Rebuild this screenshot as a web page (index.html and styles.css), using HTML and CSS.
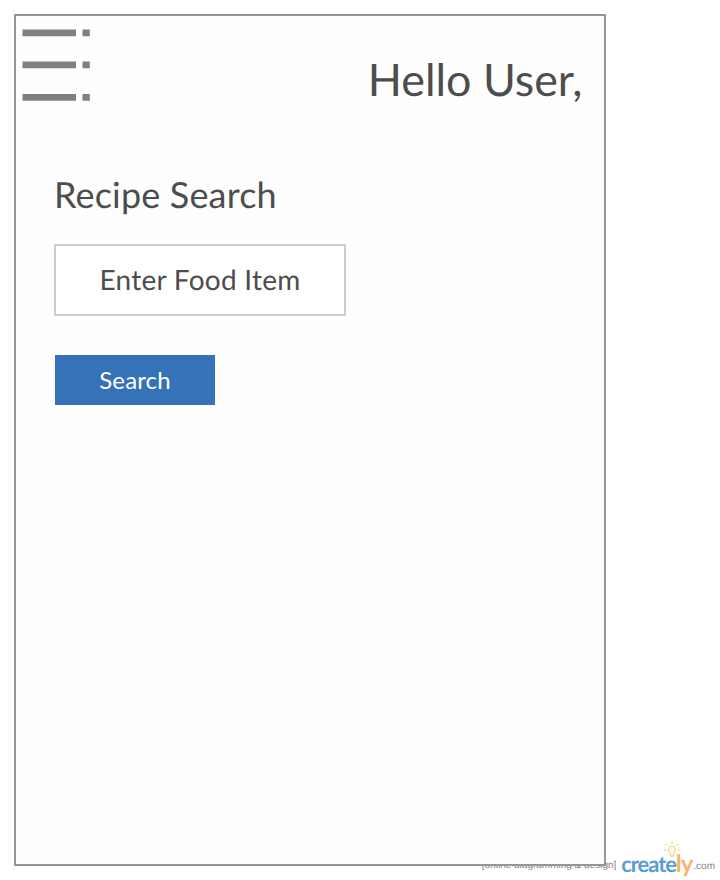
FILE: index.html
```
<!DOCTYPE html>
<html lang="en">
<head>
<meta charset="utf-8">
<title>Recipe Search</title>
<link rel="stylesheet" href="styles.css">
</head>
<body>
<main class="screen">
  <header class="header">
    <svg class="menu" width="68" height="72" viewBox="0 0 68 72" fill="#808080">
      <path d="M.5.5H54V7.300H.5zM60.500.5H67.800V7.300H60.500zM.5 32.500H54V39.300H.5zM60.500 32.500H67.800V39.300H60.500zM.5 65H54V71.800H.5zM60.500 65H67.800V71.800H60.500z"/>
    </svg>
    <div class="greeting">Hello User,</div>
  </header>
  <section class="search">
    <h1 class="title">Recipe Search</h1>
    <div class="field">Enter Food Item</div>
    <button class="button">Search</button>
  </section>
</main>
<footer class="credit">
  <span class="tagline">[online diagramming &amp; design]</span>
  <span class="brand">create<span class="ly">ly</span>
    <svg class="bulb" width="18" height="18" viewBox="0 0 18 18" fill="none" stroke="#fbd38a" stroke-width="1.300">
      <path d="M7.500 15V12.500Q5.500 11 5.500 8.800A3.500 3.500 0 0 1 12.500 8.800Q12.500 11 10.500 12.500V15zM9 .5V3M3 3L4.500 4.500M15 3L13.500 4.500M.5 9H3M15 9H17.500"/>
    </svg>
  </span>
  <span class="domain">.com</span>
</footer>
</body>
</html>
```
FILE: styles.css
```
* { box-sizing: border-box; }
body {
  margin: 0;
  padding: 14px;
  height: 880px;
  overflow: hidden;
  position: relative;
  background: #fff;
  color: #4d4d4d;
  font-family: Lato, sans-serif;
  text-rendering: geometricPrecision;
}
.screen {
  position: relative;
  z-index: 1;
  width: 592px;
  height: 852px;
  border: 2px solid #969696;
  background: #fefefe;
}
.header {
  display: flex;
  justify-content: space-between;
  height: 146px;
  padding: 13px 21.5px 0 6px;
}
.menu { display: block; }
.greeting {
  margin-top: 23px;
  font-size: 44.8px;
  line-height: 54px;
  white-space: nowrap;
}
.search {
  display: flex;
  flex-direction: column;
  align-items: flex-start;
  padding-left: 38px;
}
.title {
  margin: 10px 0 28px;
  font-size: 36px;
  line-height: 44px;
  font-weight: 400;
  letter-spacing: .17px;
}
.field {
  width: 292px;
  height: 72px;
  border: 2px solid #ccc;
  background: #fff;
  font-size: 28px;
  line-height: 66px;
  text-align: center;
  letter-spacing: .25px;
}
.button {
  width: 160px;
  height: 50px;
  margin: 39px 0 0 1px;
  padding: 0;
  border: 0;
  background: #3572b8;
  color: #fff;
  font: 24px/50px Lato, sans-serif;
  letter-spacing: .15px;
}
.credit {
  position: absolute;
  right: 5px;
  bottom: 2px;
  display: flex;
  align-items: flex-start;
  height: 30px;
  color: #808080;
  font-family: "Liberation Sans", sans-serif;
  font-size: 10px;
  line-height: 12px;
}
.tagline { margin: 12px 5px 0 0; }
.brand {
  position: relative;
  width: 71px;
  padding-top: 2px;
  color: #5a9bd3;
  font: 700 22px/28px Lato, sans-serif;
  letter-spacing: -1.1px;
  white-space: nowrap;
}
.ly { color: #fbb46b; font-size: 24px; line-height: 20px; letter-spacing: -1px; }
.bulb { position: absolute; left: 42px; top: -7px; }
.domain { margin: 13px 0 0 1px; }
```
